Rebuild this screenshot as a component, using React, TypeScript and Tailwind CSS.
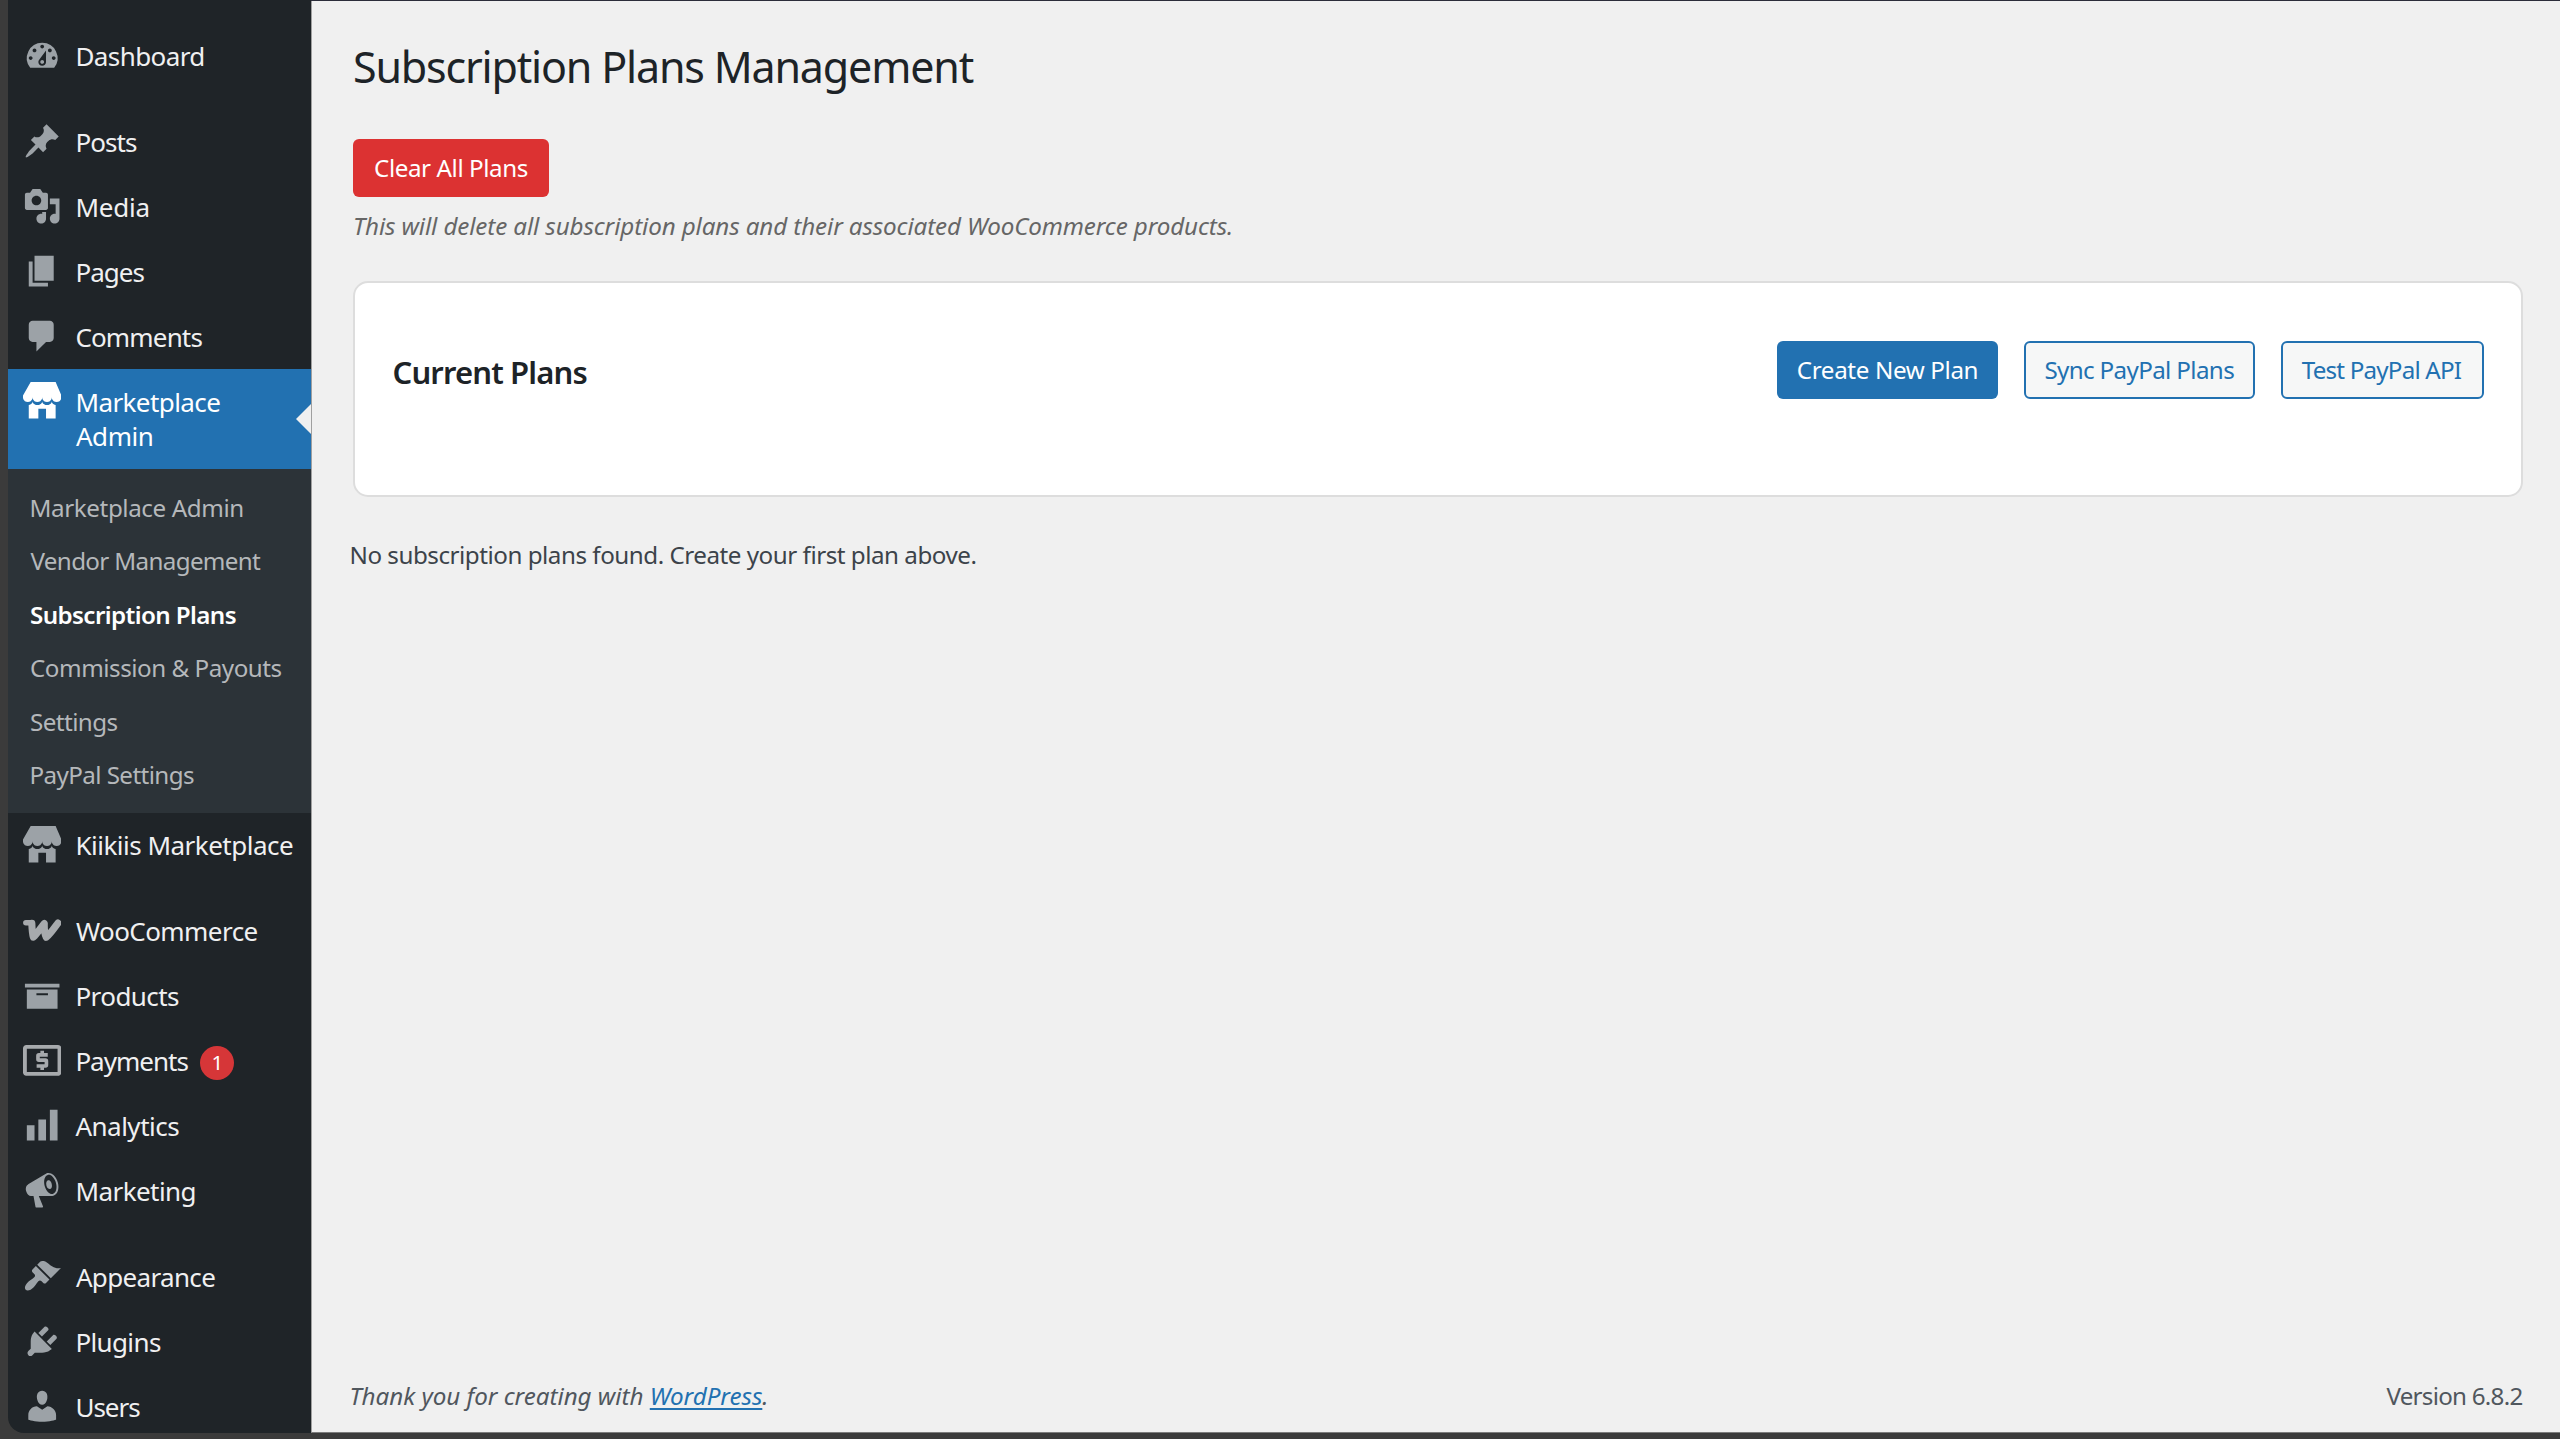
import type { ReactNode } from "react";

function Icon({ children }: { children: ReactNode }) {
  return (
    <svg viewBox="0 0 20 20" className="h-[38.4px] w-[38.4px] shrink-0 fill-current">
      {children}
    </svg>
  );
}

const STORE =
  "M1 10c.41.29.96.43 1.5.43.55 0 1.09-.14 1.5-.43.62-.46 1-1.17 1-2 0 .83.37 1.54 1 2 .41.29.96.43 1.5.43.55 0 1.09-.14 1.5-.43.62-.46 1-1.17 1-2 0 .83.37 1.54 1 2 .41.29.96.43 1.51.43.54 0 1.08-.14 1.49-.43.62-.46 1-1.17 1-2 0 .83.37 1.54 1 2 .41.29.96.43 1.5.43.55 0 1.09-.14 1.5-.43.63-.46 1-1.17 1-2V7l-3-7H4L0 7v1c0 .83.37 1.54 1 2zm2 8.99h5v-5h4v5h5v-7c-.37-.05-.72-.22-1-.43-.63-.45-1-.73-1-1.56 0 .83-.38 1.11-1 1.56-.41.3-.95.43-1.49.44-.55 0-1.1-.14-1.51-.44-.63-.45-1-.73-1-1.56 0 .83-.38 1.11-1 1.56-.41.3-.95.43-1.5.44-.54 0-1.09-.14-1.5-.44-.63-.45-1-.73-1-1.57 0 .84-.38 1.12-1 1.57-.29.21-.63.38-1 .44v6.99z";

const ICONS: Record<string, ReactNode> = {
  dashboard: (
    <path d="M3.76 16h12.48A7.998 7.998 0 0010 3a7.998 7.998 0 00-6.24 13zM10 4c.55 0 1 .45 1 1s-.45 1-1 1-1-.45-1-1 .45-1 1-1zM6 6c.55 0 1 .45 1 1s-.45 1-1 1-1-.45-1-1 .45-1 1-1zm8 0c.55 0 1 .45 1 1s-.45 1-1 1-1-.45-1-1 .45-1 1-1zm-5.37 5.55L12 7v6c0 1.1-.9 2-2 2s-2-.9-2-2c0-.57.24-1.08.63-1.45zM4 10c.55 0 1 .45 1 1s-.45 1-1 1-1-.45-1-1 .45-1 1-1zm12 0c.55 0 1 .45 1 1s-.45 1-1 1-1-.45-1-1 .45-1 1-1zm-5 3c0-.55-.45-1-1-1s-1 .45-1 1 .45 1 1 1 1-.45 1-1z" />
  ),
  pin: (
    <path d="M10.44 3.02l1.82-1.82 6.36 6.35-1.83 1.82c-1.05-.68-2.48-.57-3.41.36l-.75.75c-.92.93-1.04 2.35-.35 3.41l-1.83 1.82-2.41-2.41-2.8 2.79c-.42.42-3.38 2.71-3.8 2.29s1.86-3.39 2.28-3.81l2.79-2.79L4.1 9.36l1.83-1.82c1.05.69 2.48.57 3.4-.36l.75-.75c.93-.92 1.05-2.35.36-3.41z" />
  ),
  media: (
    <path d="M13 11V4c0-.55-.45-1-1-1h-1.67L9 1H5L3.67 3H2c-.55 0-1 .45-1 1v7c0 .55.45 1 1 1h10c.55 0 1-.45 1-1zM7 4.5c1.38 0 2.5 1.12 2.5 2.5S8.38 9.5 7 9.5 4.5 8.38 4.5 7 5.62 4.5 7 4.5zM14 6h5v10.5c0 1.38-1.12 2.5-2.5 2.5S14 17.88 14 16.5s1.12-2.5 2.5-2.5c.17 0 .34.02.5.05V9h-3V6zm-4 8.05V13h2v3.5c0 1.38-1.12 2.5-2.5 2.5S7 17.88 7 16.5 8.12 14 9.5 14c.17 0 .34.02.5.05z" />
  ),
  pages: <path d="M6 15V2h10v13H6zm-1 1h8v2H3V5h2v11z" />,
  comments: (
    <path d="M5 2h9c1.1 0 2 .9 2 2v7c0 1.1-.9 2-2 2h-2l-5 5v-5H5c-1.1 0-2-.9-2-2V4c0-1.1.9-2 2-2z" />
  ),
  store: <path d={STORE} />,
  woo: (
    <g className="fill-none stroke-current" strokeLinecap="round" strokeLinejoin="round">
      <path d="M1.5 6.1H4.3" strokeWidth="2.9" />
      <path d="M4.6 6.4C4.700 9.400 4.800 11.600 5.400 13.600C7.300 12 9.200 8.800 11.100 6.500C11 9.200 11.200 11.800 12.100 13.700C14.200 12 16.300 8.900 18.200 6.300" strokeWidth="3.700" />
    </g>
  ),
  archive: <path d="M19 4v2H1V4h18zM2 7h16v10H2V7zm11 3V9H7v1h6z" />,
  payments: (
    <>
      <path d="M1.7 2.1h16.6c.9 0 1.7.8 1.7 1.7v12.6c0 .9-.8 1.7-1.7 1.7H1.7C.8 18.1 0 17.3 0 16.4V3.8C0 2.9.8 2.1 1.7 2.1zM2 4.1v12h16v-12H2z" fillRule="evenodd" />
      <path
        d="M12.9 7.2H8.300c-.3 0-.5.200-.5.500v1.800c0 .3.200.5.500.5h3.400c.3 0 .5.200.5.500v2c0 .3-.2.500-.5.500H7.100M10 5.100v2.100M10 13v2.100"
        className="fill-none stroke-current"
        strokeWidth="1.900"
      />
    </>
  ),
  chart: <path d="M18 18V2h-4v16h4zm-6 0V7H8v11h4zm-6 0v-8H2v8h4z" />,
  megaphone: (
    <path d="M18.15 5.94c.46 1.62.38 3.22-.02 4.48-.42 1.28-1.26 2.18-2.3 2.48-.16.06-.26.06-.4.06-.06.02-.12.02-.18.02-.06.02-.14.02-.22.02h-6.8l2.22 5.5c.02.14-.06.26-.14.34-.08.1-.24.16-.34.16H6.95c-.1 0-.26-.06-.34-.16-.08-.08-.16-.2-.14-.34l-1-5.5H4.25l-.02-.02c-.5.06-1.08-.18-1.54-.62s-.88-1.08-1.06-1.88c-.24-.8-.2-1.56-.02-2.2.18-.62.58-1.08 1.06-1.3l.02-.02 9-5.4c.1-.06.18-.1.24-.16.06-.04.14-.08.24-.12.16-.08.28-.12.5-.18 1.04-.3 2.24.1 3.22.98s1.84 2.24 2.26 3.86zm-2.58 5.98h-.02c.4-.1.74-.34 1.04-.7.58-.7.86-1.76.86-3.04 0-.64-.1-1.3-.28-1.98-.34-1.36-1.02-2.5-1.78-3.24s-1.68-1.1-2.46-.88c-.82.22-1.4.96-1.7 2-.32 1.04-.28 2.36.06 3.72.38 1.36 1 2.5 1.8 3.24.78.74 1.62 1.1 2.48.88zm-2.54-7.08c.22-.04.42-.02.62.04.38.16.76.48 1.02 1s.42 1.2.42 1.78c0 .3-.04.56-.12.8-.18.48-.44.84-.86.94-.34.1-.8-.06-1.14-.4s-.64-.86-.78-1.5c-.18-.62-.12-1.24.02-1.72s.48-.84.82-.94z" />
  ),
  brush: (
    <path d="M14.48 11.06L7.41 3.99l1.5-1.5c.5-.56 2.3-.47 3.51.32 1.21.8 1.43 1.28 2.91 2.1 1.18.64 2.45 1.26 4.45.85zm-.71.71L6.7 4.7 4.93 6.47c-.39.39-.39 1.02 0 1.41l1.06 1.06c.39.39.39 1.03 0 1.42-.6.6-1.43 1.11-2.21 1.69-.35.26-.7.53-1.01.84C1.43 14.23.4 16.08 1.4 17.07c.99 1 2.84-.03 4.18-1.36.31-.31.58-.66.85-1.02.57-.78 1.08-1.61 1.69-2.21.39-.39 1.02-.39 1.41 0l1.06 1.06c.39.39 1.02.39 1.41 0z" />
  ),
  plug: (
    <path d="M13.11 4.36L9.87 7.6 8 5.73l3.24-3.24c.35-.34 1.05-.2 1.56.32.52.51.66 1.21.31 1.55zm-8 1.77l.91-1.12 9.01 9.01-1.19.84c-.71.71-2.63 1.16-3.82 1.16H6.14L4.9 17.26c-.59.59-1.54.59-2.12 0-.59-.58-.59-1.53 0-2.12l1.24-1.24v-3.88c0-1.13.4-3.19 1.09-3.89zm7.26 3.97l3.24-3.24c.34-.35 1.04-.21 1.55.31.52.51.66 1.21.31 1.55l-3.24 3.25z" />
  ),
  user: (
    <path d="M10 9.25c-2.27 0-2.73-3.44-2.73-3.44C7 4.02 7.82 2 9.97 2c2.16 0 2.98 2.02 2.71 3.81 0 0-.41 3.44-2.68 3.44zm0 2.57L12.72 10c2.39 0 4.52 2.33 4.52 4.53v2.49s-3.65 1.13-7.24 1.13c-3.65 0-7.24-1.13-7.24-1.13v-2.49c0-2.25 1.94-4.48 4.47-4.48z" />
  ),
};

type Entry = { label: string; icon: string; tracking: string; badge?: string; tint?: string };

function MenuItem({ item }: { item: Entry }) {
  return (
    <li className={`flex h-[65px] items-start gap-[14.5px] pl-[15px] ${item.tint ?? "text-[#9ca2a7]"}`}>
      <div className="pt-[13px]">
        <Icon>{ICONS[item.icon]}</Icon>
      </div>
      <span className={`pt-[0.8px] text-[26px] leading-[65px] whitespace-nowrap text-[#f0f0f1] ${item.tracking}`}>
        {item.label}
      </span>
      {item.badge && (
        <span className="mt-[17.500px] -ml-[2px] flex h-[34px] w-[34px] items-center justify-center rounded-full bg-[#d63638] text-[20.500px] leading-none text-white">
          {item.badge}
        </span>
      )}
    </li>
  );
}

const GROUP_TOP: Entry[] = [
  { label: "Posts", icon: "pin", tracking: "tracking-[-0.95px]" },
  { label: "Media", icon: "media", tracking: "tracking-[-0.2px]" },
  { label: "Pages", icon: "pages", tracking: "tracking-[-0.99px]" },
  { label: "Comments", icon: "comments", tracking: "tracking-[-0.84px]" },
];

const GROUP_STORE: Entry[] = [
  { label: "WooCommerce", icon: "woo", tracking: "pl-[0.5px] tracking-[-0.56px]", tint: "text-[#a7aaad]" },
  { label: "Products", icon: "archive", tracking: "tracking-[-0.56px]" },
  { label: "Payments", icon: "payments", tracking: "tracking-[-1px]", badge: "1", tint: "text-[#a7aaad]" },
  { label: "Analytics", icon: "chart", tracking: "tracking-[-0.5px]" },
  { label: "Marketing", icon: "megaphone", tracking: "tracking-[-0.55px]" },
];

const GROUP_SITE: Entry[] = [
  { label: "Appearance", icon: "brush", tracking: "pl-[0.5px] tracking-[-0.66px]" },
  { label: "Plugins", icon: "plug", tracking: "tracking-[-0.63px]" },
  { label: "Users", icon: "user", tracking: "tracking-[-1.02px]" },
];

const SUBMENU = [
  { label: "Marketplace Admin", style: "tracking-[-0.4px] text-[#b5b8bb]" },
  { label: "Vendor Management", style: "pl-[1px] tracking-[-0.66px] text-[#b5b8bb]" },
  { label: "Subscription Plans", style: "pl-[0.5px] font-semibold tracking-[-0.61px] text-white" },
  { label: "Commission & Payouts", style: "pl-[0.5px] tracking-[-0.47px] text-[#b5b8bb]" },
  { label: "Settings", style: "pl-[0.5px] tracking-[-0.56px] text-[#b5b8bb]" },
  { label: "PayPal Settings", style: "tracking-[-0.59px] text-[#b5b8bb]" },
];

function Sidebar() {
  return (
    <nav className="h-[1432.500px] w-[303.5px] shrink-0 overflow-hidden rounded-bl-[16px] bg-[#1f2428] pt-[23.6px]">
      <ul>
        <MenuItem item={{ label: "Dashboard", icon: "dashboard", tracking: "tracking-[-0.58px]" }} />
      </ul>
      <ul className="pt-[20.7px]">
        {GROUP_TOP.map((i) => (
          <MenuItem key={i.label} item={i} />
        ))}
        <li>
          <div className="relative flex h-[100px] gap-[14.5px] bg-[#2271b1] pl-[15px] text-white">
            <div className="pt-[13px]">
              <Icon>{ICONS.store}</Icon>
            </div>
            <div className="pt-[15.4px] text-[26px] leading-[34.2px]">
              <div className="tracking-[-0.58px]">Marketplace</div>
              <div className="pl-[0.5px] tracking-[-0.41px]">Admin</div>
            </div>
            <span className="absolute top-[34.5px] right-0 border-y-[15.2px] border-r-[15.2px] border-y-transparent border-r-[#f0f0f0]" />
          </div>
          <ul className="bg-[#2c3338] pt-[11.3px] pb-[11px] pl-[22px]">
            {SUBMENU.map((s) => (
              <li key={s.label} className={`text-[24.2px] leading-[53.5px] whitespace-nowrap ${s.style}`}>
                {s.label}
              </li>
            ))}
          </ul>
        </li>
        <MenuItem item={{ label: "Kiikiis Marketplace", icon: "store", tracking: "tracking-[-0.5px]" }} />
      </ul>
      <ul className="pt-[20.5px]">
        {GROUP_STORE.map((i) => (
          <MenuItem key={i.label} item={i} />
        ))}
      </ul>
      <ul className="pt-[20.7px]">
        {GROUP_SITE.map((i) => (
          <MenuItem key={i.label} item={i} />
        ))}
      </ul>
    </nav>
  );
}

function Main() {
  return (
    <main className="flex h-[1432px] flex-1 flex-col border-b border-l border-[#a0a0a0] border-b-[#7c7c7c] bg-[#f0f0f0] pr-[37.500px] pl-[37.5px]">
      <div className="pl-[3.5px]">
        <h1 className="pt-[36px] text-[43px] leading-[60px] tracking-[-1.18px] text-[#1d2327]">
          Subscription Plans Management
        </h1>
        <button className="mt-[42px] flex h-[58px] w-[196px] items-center justify-center rounded-[6px] bg-[#dc3232] pt-[1px] text-[24.2px] tracking-[-0.42px] whitespace-nowrap text-white">
          Clear All Plans
        </button>
        <p className="pt-[13px] text-[24.2px] leading-[32px] tracking-[-0.12px] text-[#666] italic">
          This will delete all subscription plans and their associated WooCommerce products.
        </p>
        <section className="mt-[39px] flex h-[216px] items-start justify-between rounded-[15px] border-2 border-[#dddddd] bg-white pt-[58px] pr-[37px] pl-[37.5px]">
          <h2 className="pt-[0.5px] text-[31px] leading-[60px] font-semibold tracking-[-0.85px] text-[#1d2327]">Current Plans</h2>
          <div className="flex gap-[26px] text-[24.2px] whitespace-nowrap">
            <button className="flex h-[58px] w-[221px] items-center justify-center rounded-[6px] bg-[#2271b1] pt-[1px] tracking-[-0.37px] text-white">
              Create New Plan
            </button>
            <button className="flex h-[58px] w-[230.5px] items-center justify-center rounded-[6px] border-2 border-[#2271b1] bg-[#f6f7f7] pt-[1px] tracking-[-0.65px] text-[#2271b1]">
              Sync PayPal Plans
            </button>
            <button className="flex h-[58px] w-[203px] items-center justify-center rounded-[6px] border-2 border-[#2271b1] bg-[#f6f7f7] pt-[1px] pr-[1px] tracking-[-0.81px] text-[#2271b1]">
              Test PayPal API
            </button>
          </div>
        </section>
      </div>
      <p className="pt-[42px] text-[24.2px] leading-[32px] tracking-[-0.48px] text-[#3c434a]">
        No subscription plans found. Create your first plan above.
      </p>
      <footer className="mt-auto flex justify-between pb-[20.500px] text-[24.2px] leading-[32px] text-[#50575e]">
        <p className="tracking-[-0.03px] italic">
          Thank you for creating with{" "}
          <a className="text-[#2271b1] underline decoration-2 underline-offset-[3px]">WordPress</a>.
        </p>
        <p className="tracking-[-0.75px]">Version 6.8.2</p>
      </footer>
    </main>
  );
}

export default function App() {
  return (
    <div className="h-[1439px] w-[2560px] overflow-hidden bg-[#3b3b3b] pl-[7.5px] font-['Noto_Sans',sans-serif]">
      <div className="flex">
        <Sidebar />
        <div className="flex flex-1 border-t border-[#2b2d3a]">
          <Main />
        </div>
      </div>
    </div>
  );
}
